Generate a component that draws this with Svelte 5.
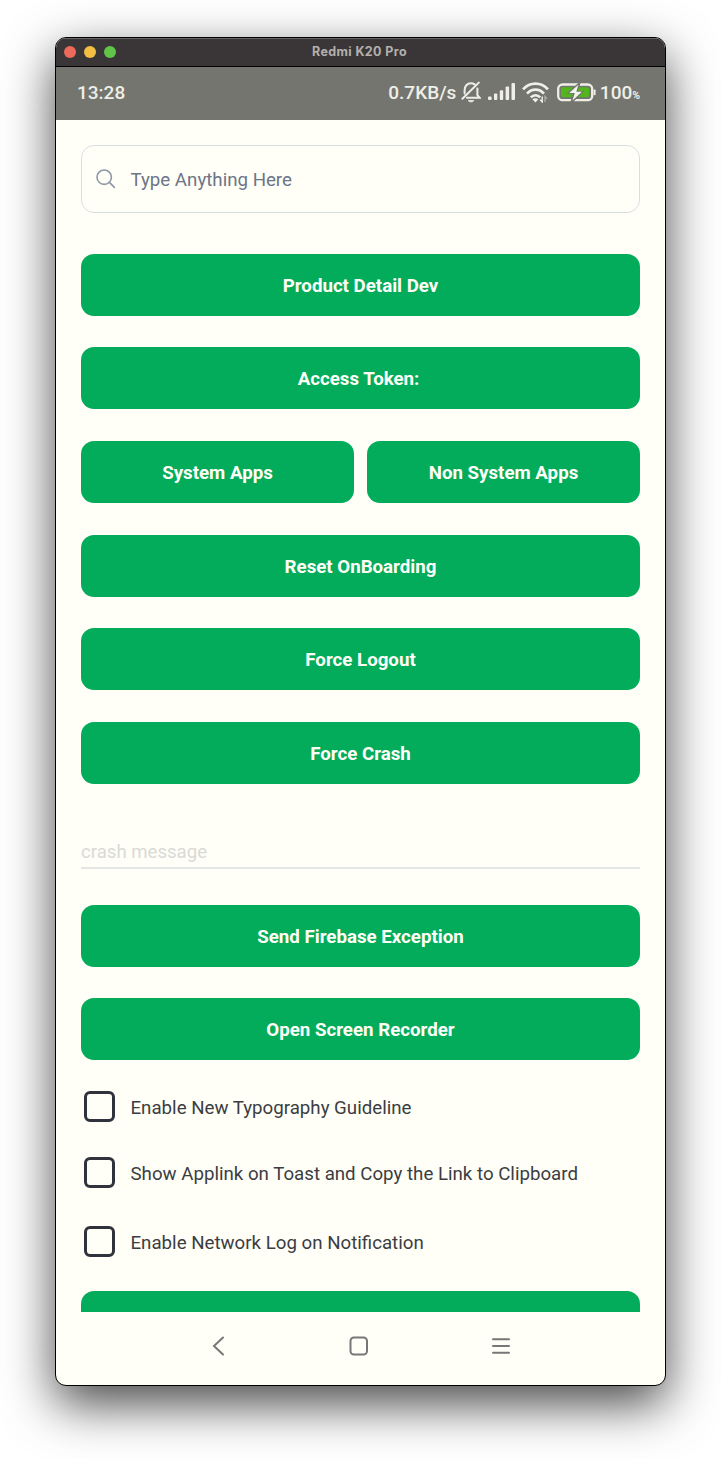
<script>
  const options = [
    'Enable New Typography Guideline',
    'Show Applink on Toast and Copy the Link to Clipboard',
    'Enable Network Log on Notification'
  ];
</script>

<div class="desktop">
  <div class="window">
    <header class="titlebar">
      <div class="lights"><i class="red"></i><i class="yellow"></i><i class="green"></i></div>
      <span class="title">Redmi K20 Pro</span>
    </header>

    <div class="status">
      <span class="time">13:28</span>
      <span class="speed">0.7KB/s</span>
      <svg class="bell" width="20" height="22" viewBox="0 0 20 22" fill="none" stroke="#efefe8" stroke-width="2">
        <path d="M3.6 12.5V9.2C3.6 5.3 6 2.3 10 2.3c1.5 0 2.6.4 3.6 1M16.4 7.5v6.7l2.3 2.6H6M1.4 17.8L17.8 1.6" stroke-linecap="round" />
        <path d="M7.2 19.6h5.6c-.8 1.7-4.8 1.7-5.6 0z" fill="#efefe8" stroke-width=".8" />
      </svg>
      <svg class="signal" width="28" height="18" viewBox="0 0 28 18" fill="#efefe8">
        <rect x="0" y="13.6" width="3.6" height="3.4" rx="1" />
        <rect x="6" y="10.5" width="3.3" height="6.5" rx="1" />
        <rect x="11.8" y="7.2" width="3.4" height="9.8" rx="1" />
        <rect x="17.6" y="3.6" width="3.5" height="13.4" rx="1" />
        <rect x="23.5" y="0" width="3.5" height="17" rx="1" />
      </svg>
      <svg class="wifi" width="27" height="21" viewBox="0 0 27 21" fill="none" stroke="#efefe8" stroke-width="2.7">
        <path d="M1 7.4C8-.2 19-.2 26 7.4M5 11.6c5-5.2 12-5.2 17 0M8.8 15.4c2.8-2.9 6.6-2.9 9.4 0" />
        <path d="M10.4 17.3c1.8-1.5 4.2-1.5 6 0L13.4 20.4z" fill="#efefe8" stroke="none" />
        <path d="M20.2 14.5v5.5l-2-2.2" stroke-width="1.4" />
        <path d="M23 20v-5.5l2 2.2" stroke-width="1.3" stroke="#aeaea8" />
      </svg>
      <svg class="battery" width="39" height="19" viewBox="0 0 39 19">
        <rect x="1.2" y="1.5" width="34" height="15.7" rx="4.3" fill="none" stroke="#efefe8" stroke-width="2.3" />
        <rect x="4" y="4.2" width="28" height="10.1" rx="1.8" fill="#51b51b" />
        <path d="M21.3 0L9.5 10.8h6.4L13.4 18.9h2.8L27.2 8h-6.5L23.6 0z" fill="#74756f" />
        <path d="M21.4 1.8l-9.2 8.3h5.6l-2.3 7.3 9.4-8.6h-5.6z" fill="#f5f5ef" />
        <rect x="36.6" y="6.4" width="2" height="5.8" rx=".9" fill="#efefe8" />
      </svg>
      <span class="percent">100</span><span class="sign">%</span>
    </div>

    <main>
      <div class="search">
        <svg width="20" height="20" viewBox="0 0 20 20" fill="none" stroke="#8e98a6" stroke-width="1.6" stroke-linecap="round">
          <circle cx="8.2" cy="8.2" r="7.2" /><path d="M13.4 13.4l5 5" />
        </svg>
        <span>Type Anything Here</span>
      </div>

      <div class="stack">
        <button>Product Detail Dev</button>
        <button class="token">Access Token: </button>
        <div class="pair"><button>System Apps</button><button>Non System Apps</button></div>
        <button>Reset OnBoarding</button>
        <button>Force Logout</button>
        <button>Force Crash</button>
      </div>

      <div class="field">crash message</div>

      <div class="stack lower">
        <button>Send Firebase Exception</button>
        <button>Open Screen Recorder</button>
      </div>

      <div class="options">
        {#each options as option}
          <div class="option"><i class="box"></i><span>{option}</span></div>
        {/each}
      </div>

      <div class="partial"></div>
    </main>

    <nav>
      <svg width="13" height="20" viewBox="0 0 13 20"><path d="M11 1.5L2 10l9 8.5" /></svg>
      <svg width="20" height="20" viewBox="0 0 20 20"><rect x="1.5" y="1.5" width="16.5" height="17" rx="3.5" /></svg>
      <svg width="18" height="18" viewBox="0 0 18 18"><path d="M1 2.2h16M1 9h16M1 15.8h16" /></svg>
    </nav>
  </div>
</div>

<style>
  :global(body) { background: #fff; }
  .desktop {
    box-sizing: border-box;
    width: 721px;
    height: 1459px;
    padding: 37px 55px;
    overflow: hidden;
    font-family: Roboto, sans-serif;
  }
  .window {
    box-sizing: border-box;
    width: 611px;
    height: 1349px;
    border: 1px solid #000;
    border-radius: 11px;
    overflow: hidden;
    background: #fffff7;
    box-shadow: 0 18px 50px rgba(0, 0, 0, 0.72);
    display: flex;
    flex-direction: column;
  }
  .titlebar {
    box-sizing: border-box;
    height: 29px;
    flex: none;
    display: grid;
    grid-template-columns: 60px 1fr 60px;
    align-items: center;
    padding-bottom: 2px;
    background: #3a3637;
    border-top: 1px solid #686566;
    border-bottom: 1px solid #000;
  }
  .lights { display: flex; gap: 8px; padding-left: 8px; }
  .lights i { width: 12px; height: 12px; border-radius: 50%; }
  .red { background: #ec6a5a; }
  .yellow { background: #f2bf42; }
  .green { background: #60c548; }
  .title {
    text-align: center;
    color: #b3b0af;
    font: 700 12.5px/16px Inter, sans-serif;
    letter-spacing: 0.38px;
    padding-right: 2px;
  }
  .status {
    box-sizing: border-box;
    height: 53px;
    flex: none;
    display: flex;
    align-items: center;
    padding: 0 25px 3px 21px;
    background: #74756f;
    color: #efefe8;
    font-size: 19px;
    font-weight: 500;
    white-space: nowrap;
  }
  .status svg { flex: none; }
  .time { margin-right: auto; }
  .bell { margin-left: 4.5px; }
  .signal { margin-left: 7px; }
  .wifi { margin-left: 6px; }
  .battery { margin: 0 4px 0 8px; }
  .sign { font-size: 10.5px; font-weight: 700; padding-top: 6px; }
  main {
    height: 1192px;
    flex: none;
    box-sizing: border-box;
    padding: 25px 25px 0;
    overflow: hidden;
    font-size: 18.7px;
  }
  .search {
    box-sizing: border-box;
    height: 68px;
    border: 1px solid #d7dfe3;
    border-radius: 13px;
    display: flex;
    align-items: center;
    gap: 14.5px;
    padding-left: 14px;
    color: #6d7588;
  }
  .search span { padding-top: 2px; }
  .stack {
    margin-top: 40.6px;
    display: flex;
    flex-direction: column;
    gap: 31.65px;
  }
  button {
    display: block;
    width: 100%;
    height: 62px;
    padding: 2px 0 0;
    border: 0;
    border-radius: 13px;
    background: #03ac5b;
    color: #fffff7;
    font: 700 18.7px Roboto, sans-serif;
  }
  .token { padding-right: 4px; }
  .pair { display: flex; gap: 13px; }
  .field {
    box-sizing: border-box;
    height: 32px;
    margin-top: 53px;
    border-bottom: 2px solid #e3e6e4;
    line-height: 31px;
    font-size: 18.6px;
    color: #d9dad6;
  }
  .lower { margin-top: 36px; }
  .options { margin-top: 31px; padding-left: 3px; color: #3b3d43; }
  .option { display: flex; align-items: center; gap: 15.5px; height: 31px; margin-bottom: 34.5px; }
  .option:nth-child(2) { margin-bottom: 38px; }
  .box {
    box-sizing: border-box;
    width: 31px;
    height: 31px;
    border: 3px solid #30333b;
    border-radius: 6px;
  }
  .option span { padding-top: 3px; }
  .partial { height: 62px; border-radius: 13px; background: #03ac5b; }
  nav {
    flex: 1;
    display: flex;
    align-items: center;
    justify-content: space-between;
    padding: 0 155px 5px 156px;
  }
  nav svg { fill: none; stroke: #777; stroke-width: 2; stroke-linecap: round; }
</style>
